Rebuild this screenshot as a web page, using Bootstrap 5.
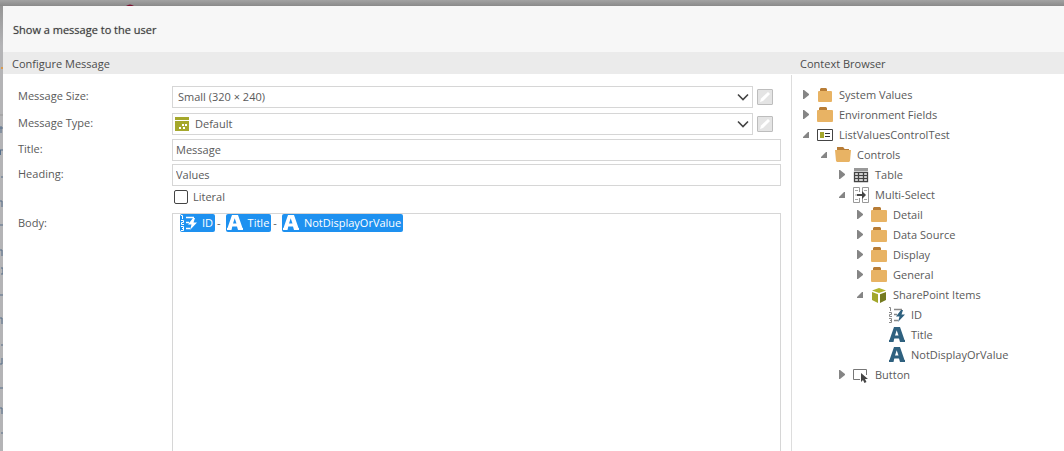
<!DOCTYPE html>
<html lang="en">
<head>
<meta charset="utf-8">
<meta name="viewport" content="width=device-width, initial-scale=1">
<title>Show a message to the user</title>
<link href="https://cdn.jsdelivr.net/npm/bootstrap@5.3.0/dist/css/bootstrap.min.css" rel="stylesheet">
<style>
body { font-family: "Open Sans", sans-serif; font-size: 11px; line-height: 20px; color: #5a5a5a; background: #b0b0b2; }
.page-edge { height: 6px; background: linear-gradient(#a3a3a3, #8a8a8a); }
.side-edge { width: 3px; background: linear-gradient(#969696, #b4b4b6 40px); }
.dialog-head { height: 46px; background: #f7f7f7; padding: 2px 10px 0; color: #3c3c3c; font-size: 11px; font-weight: 500; text-shadow: 0 0 1px #999; }
.section-head { height: 22px; line-height: 24px; background: #ebebeb; padding: 0 9px; color: #4c4c4c; font-size: 11px; font-weight: 400; margin: 0; }
.context-pane { width: 273px; }
.context-body { border-left: 1px solid #ddd; padding: 10px 0 0 8px; margin-top: 1px; }
.form-body { padding: 12px 10px 0 15px; }
.field-label { width: 154px; flex: none; padding-bottom: 2px; }
.select-row { margin-bottom: 5px; }
.input-row { margin-bottom: 3px; }
.select-row + .input-row { margin-top: -1px; }
.form-body .form-control, .form-body .form-select { height: 22px; min-height: 22px; border: 1px solid #d6d6d6; border-radius: 0; padding: 0 3px 1px; font-size: 11px; line-height: 19px; color: #5a5a5a; box-shadow: none; }
.form-body .form-select { padding: 0 24px 1px 5px; background-size: 12px 8px; background-position: right 3px center; background-image: url("data:image/svg+xml,%3Csvg xmlns='http://www.w3.org/2000/svg' viewBox='0 0 12 8'%3E%3Cpath d='M1 1.5l5 5 5-5' fill='none' stroke='%23444' stroke-width='1.6'/%3E%3C/svg%3E"); }
.form-body .with-icon { padding-left: 22px; }
.select-icon { left: 3px; top: 4px; pointer-events: none; }
.edit-btn { width: 16px; height: 16px; margin: 0 8px 0 4px; border: 1px solid #bdbdbd; border-radius: 1px; background: #e4e4e4; }
.literal-row { margin: -2px 0 6px; }
.form-body .form-check-input { width: 14px; height: 14px; margin: 0 5px 0 2px; border: 1px solid #444; border-radius: 2px; }
.token-box { border: 1px solid #d6d6d6; border-bottom: 0; padding: 0 7px; line-height: 18px; }
.token { height: 18px; background: #1e91f0; color: #fff; border-radius: 2px; padding: 0 2px 0 1px; gap: 5px; font-weight: 500; }
.joiner { padding: 0 5px 0 2px; }
.tree, .tree ul { list-style: none; margin: 0; padding: 0; }
.tree ul { padding-left: 18px; }
.tree-row { height: 20px; white-space: nowrap; }
.toggle { width: 17px; height: 20px; padding: 0 0 2px 3px; border: 0; background: none; flex: none; }
.tree-icon { width: 16px; height: 16px; flex: none; margin-right: 6px; }
svg { display: block; }
</style>
</head>
<body>
<svg width="0" height="0" class="position-absolute" aria-hidden="true">
  <symbol id="closed" viewBox="0 0 7 9"><path d="M0 0h1l5 4v1L1 9H0z" fill="#858585"/></symbol>
  <symbol id="open" viewBox="0 0 7 9"><path d="M6 2v6H0v-1l5-5z" fill="#858585"/></symbol>
  <symbol id="folder" viewBox="0 0 16 16"><path d="M3 0h6l1 1v2H2V1z" fill="#b87d36"/><rect y="3" width="16" height="12" rx="1" fill="#e8b364"/></symbol>
  <symbol id="folder-small" viewBox="0 0 16 16"><path d="M4 1h5l1 1v2H3V2z" fill="#b87d36"/><rect x="1" y="4" width="14" height="11" rx="1" fill="#e8b364"/></symbol>
  <symbol id="folder-open" viewBox="0 0 16 16"><path d="M2 0h6l2 2h4v4H2z" fill="#b87d36"/><path d="M9 1l1 1h4V1z" fill="#fff"/><path d="M0 3h16l-1 11-1 1H2l-1-1z" fill="#e8b364"/></symbol>
  <symbol id="form" viewBox="0 0 16 16"><path d="M.5 2.500h15v11H.5z" fill="#fff" stroke="#444"/><path d="M3 5h4v6H3z" fill="#a5a82c"/><path d="M8 6.500h5M8 9.500h5" stroke="#333" stroke-width="1.200"/></symbol>
  <symbol id="grid" viewBox="0 0 16 16"><path d="M1 1h14v3H1z" fill="#999"/><path d="M1.500 5.500h13v9h-13zM1 8.500h14M1 11.500h14M5.500 5v10M10.500 5v10" fill="none" stroke="#444" stroke-width="1.300"/></symbol>
  <symbol id="multi" viewBox="0 0 16 16"><path d="M6.500 5V.5h-6v15h6V11M9.500 5V.5h6v15h-6V11" fill="none" stroke="#999"/><path d="M2 3.500h3M2 8h2M2 12.500h3M11 3.500h3M11 12.500h3" stroke="#aaa"/><path d="M4 7h5V4l4 4-4 4V9H4z" fill="#444"/></symbol>
  <symbol id="cube" viewBox="0 0 16 16"><path d="M1 3.500L8 1l7 2.500L8 6z" fill="#b0b52d"/><path d="M1 5l6 2.200V16l-6-3z" fill="#a2a72b"/><path d="M15 5L9 7.200V16l6-3z" fill="#747a20"/></symbol>
  <symbol id="number" viewBox="0 0 16 16"><path d="M0 .5h1.500V4M0 5.500h2.500v2H.5v2h2.500M0 11.500h2.500v4H0M1 13.500h1.500" fill="none" stroke="currentColor"/><path d="M5 2.500h8M5 7.500h3M5 13.500h4" stroke="currentColor" stroke-width="1.500"/><path d="M12 3L7 9.500h3.500L9 15l7-7.500h-3.500L14 3z" fill="var(--bolt)"/></symbol>
  <symbol id="letter" viewBox="0 0 16 16"><path fill-rule="evenodd" d="M5 0h6l4.500 13h.5v2h-5l-1-3.500H5.300L4.500 15H0v-2h.5zM6 8.500h3.500L7.700 3.300z" fill="currentColor"/></symbol>
  <symbol id="pointer" viewBox="0 0 16 16"><path d="M7 12.500H.5v-10h13V8" fill="none" stroke="#777"/><path d="M8 6v9l2-2 1.500 3 2-1-1.500-3h3z" fill="#444"/></symbol>
  <symbol id="pencil" viewBox="0 0 14 14"><path d="M2 12l1-3.500L10 2l2 2-7 7z" fill="#fff"/></symbol>
</svg>
<div class="d-flex flex-column vh-100 overflow-hidden">
  <div class="page-edge flex-shrink-0">
    <svg width="140" height="6" aria-hidden="true"><path d="M126 6q4-3 8 0z" fill="#7c1230"/></svg>
  </div>
  <div class="d-flex flex-fill overflow-hidden">
    <div class="side-edge flex-shrink-0 overflow-hidden">
      <svg width="3" height="445" fill="none" stroke="#566f8a" aria-hidden="true"><path d="M1 62h2" stroke="#d99a4e" stroke-width="2"/><path d="M0 109h3" stroke="#999"/><path d="M0 122h3M1 120v7M0 144h3M0.500 144v5M1 171h2M0 195h2v6M0 219h3M0 244h2v6M1 262h2v6h-2M0 289h3M0 312h2v6M1 339h2M2 352v6H0M0 382h3M0 402h2v6M1 427h2"/></svg>
    </div>
    <main class="d-flex flex-column flex-fill bg-white overflow-hidden">
      <h1 class="dialog-head d-flex align-items-center m-0 flex-shrink-0">Show a message to the user</h1>
      <div class="d-flex flex-fill overflow-hidden">
        <section class="d-flex flex-column flex-fill">
          <h2 class="section-head flex-shrink-0">Configure Message</h2>
          <form class="form-body d-flex flex-column flex-fill">
            <div class="select-row d-flex align-items-center">
              <label class="field-label" for="size">Message Size:</label>
              <select class="form-select" id="size"><option>Small (320 × 240)</option></select>
              <button type="button" class="edit-btn p-0 flex-shrink-0" aria-label="Edit size"><svg width="14" height="14"><use href="#pencil"/></svg></button>
            </div>
            <div class="select-row d-flex align-items-center">
              <label class="field-label" for="type">Message Type:</label>
              <div class="position-relative flex-fill">
                <select class="form-select with-icon" id="type"><option>Default</option></select>
                <svg class="select-icon position-absolute" width="14" height="14" aria-hidden="true"><path d="M0 0h14v3H0zM0 4h14v10H0z" fill="#a5a82c"/><path d="M7 7h2v2H7zM10 7h2v2h-2zM4 10h2v2H4zM8 10h2v2H8z" fill="#fff"/></svg>
              </div>
              <button type="button" class="edit-btn p-0 flex-shrink-0" aria-label="Edit type"><svg width="14" height="14"><use href="#pencil"/></svg></button>
            </div>
            <div class="input-row d-flex">
              <label class="field-label" for="title">Title:</label>
              <input class="form-control" id="title" value="Message">
            </div>
            <div class="input-row d-flex">
              <label class="field-label" for="heading">Heading:</label>
              <input class="form-control" id="heading" value="Values">
            </div>
            <div class="literal-row d-flex align-items-center">
              <span class="field-label"></span>
              <input class="form-check-input" type="checkbox" id="literal">
              <label for="literal">Literal</label>
            </div>
            <div class="d-flex flex-fill">
              <span class="field-label" id="body-label">Body:</span>
              <div class="token-box flex-fill" role="textbox" aria-labelledby="body-label" contenteditable="true">
                <div class="d-flex">
                  <span class="token d-flex align-items-center" style="--bolt:#fff"><svg width="16" height="16"><use href="#number"/></svg>ID</span><span class="joiner">-</span>
                  <span class="token d-flex align-items-center"><svg width="16" height="16"><use href="#letter"/></svg>Title</span><span class="joiner">-</span>
                  <span class="token d-flex align-items-center"><svg width="16" height="16"><use href="#letter"/></svg>NotDisplayOrValue</span>
                </div>
              </div>
            </div>
          </form>
        </section>
        <aside class="context-pane d-flex flex-column flex-shrink-0">
          <h2 class="section-head flex-shrink-0">Context Browser</h2>
          <div class="context-body flex-fill">
            <ul class="tree" id="tree"></ul>
          </div>
        </aside>
      </div>
    </main>
  </div>
</div>
<script src="https://cdn.jsdelivr.net/npm/bootstrap@5.3.0/dist/js/bootstrap.bundle.min.js"></script>
<script>
// Each node: label, icon, state ("open", "closed" or "" for a leaf), children
const nodes = [
  ["System Values", "folder-small", "closed"],
  ["Environment Fields", "folder", "closed"],
  ["ListValuesControlTest", "form", "open", [
    ["Controls", "folder-open", "open", [
      ["Table", "grid", "closed"],
      ["Multi-Select", "multi", "open", [
        ["Detail", "folder", "closed"],
        ["Data Source", "folder", "closed"],
        ["Display", "folder", "closed"],
        ["General", "folder", "closed"],
        ["SharePoint Items", "cube", "open", [
          ["ID", "number", ""],
          ["Title", "letter", ""],
          ["NotDisplayOrValue", "letter", ""]
        ]]
      ]],
      ["Button", "pointer", "closed"]
    ]]
  ]]
];
const colour = { number: "#888", letter: "#2f617f" };
const render = list => list.map(([label, icon, state, kids]) => `<li>
  <div class="tree-row d-flex align-items-center">
    <button type="button" class="toggle" aria-label="Toggle ${label}">${state ? `<svg width="7" height="9"><use href="#${state}"/></svg>` : ""}</button>
    <svg class="tree-icon" style="color:${colour[icon] || "#444"};--bolt:#2f617f"><use href="#${icon}"/></svg>
    <span>${label}</span>
  </div>${kids ? `<ul>${render(kids)}</ul>` : ""}</li>`).join("");
document.getElementById("tree").innerHTML = render(nodes);
</script>
</body>
</html>
